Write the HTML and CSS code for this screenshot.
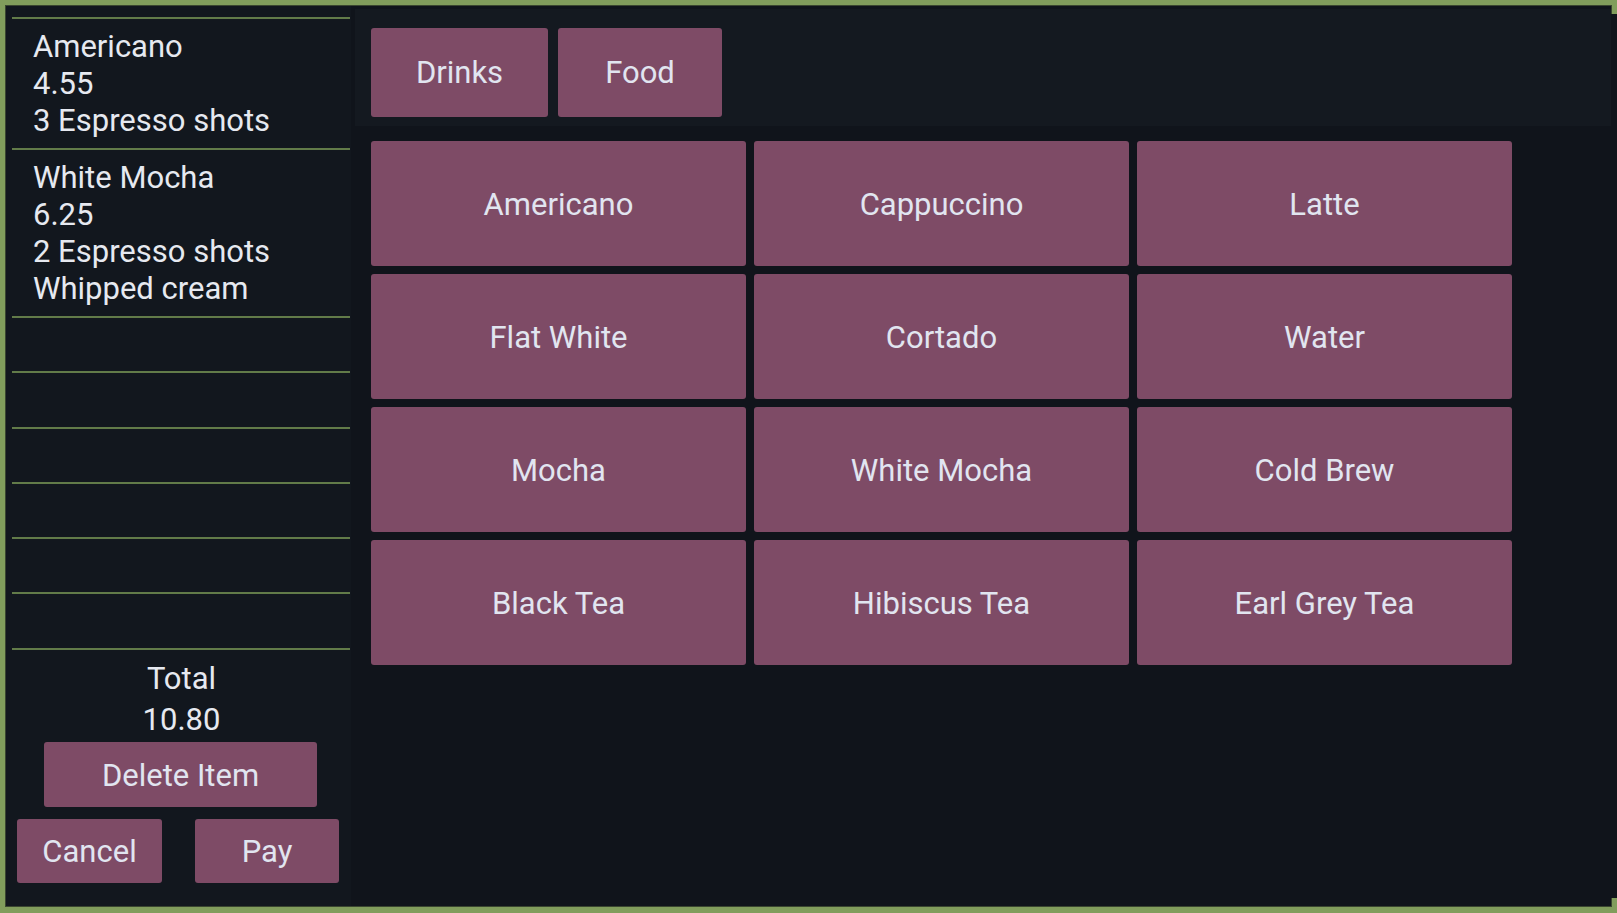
FILE: index.html
```html
<!DOCTYPE html>
<html>
<head>
<meta charset="utf-8">
<title>POS</title>
<link rel="stylesheet" href="styles.css">
</head>
<body>
<div class="app">
  <aside class="sidebar">
    <div class="order-list">
      <div class="item">Americano<br>4.55<br>3 Espresso shots</div>
      <div class="item">White Mocha<br>6.25<br>2 Espresso shots<br>Whipped cream</div>
      <div class="item empty"></div>
      <div class="item empty"></div>
      <div class="item empty"></div>
      <div class="item empty"></div>
      <div class="item empty"></div>
      <div class="item empty"></div>
    </div>
    <div class="total">
      <div class="total-label">Total</div>
      <div class="total-value">10.80</div>
    </div>
    <button class="btn btn-delete">Delete Item</button>
    <div class="action-row">
      <button class="btn btn-cancel">Cancel</button>
      <button class="btn btn-pay">Pay</button>
    </div>
  </aside>
  <main class="main">
    <div class="tabs">
      <button class="btn tab tab-drinks">Drinks</button>
      <button class="btn tab tab-food">Food</button>
    </div>
    <div class="grid">
      <button class="btn cell">Americano</button>
      <button class="btn cell">Cappuccino</button>
      <button class="btn cell">Latte</button>
      <button class="btn cell">Flat White</button>
      <button class="btn cell">Cortado</button>
      <button class="btn cell">Water</button>
      <button class="btn cell">Mocha</button>
      <button class="btn cell">White Mocha</button>
      <button class="btn cell">Cold Brew</button>
      <button class="btn cell">Black Tea</button>
      <button class="btn cell">Hibiscus Tea</button>
      <button class="btn cell">Earl Grey Tea</button>
    </div>
  </main>
</div>
</body>
</html>
```

FILE: styles.css
```css
* {
  box-sizing: border-box;
}

html, body {
  margin: 0;
  padding: 0;
}

body {
  width: 1617px;
  height: 913px;
  overflow: hidden;
  background: #819d5c;
  font-family: Roboto, "Liberation Sans", sans-serif;
  font-size: 31px;
  line-height: 37px;
  color: #e6e9f0;
}

.app {
  position: relative;
  margin: 6px 0 0 6px;
  width: 1605px;
  height: 900px;
  display: flex;
  background: #10141b;
  box-shadow: 0 0 0 1px #3a4630;
}

.app::after {
  content: "";
  position: absolute;
  left: 100%;
  top: 8px;
  width: 6px;
  height: 884px;
  background: #10141b;
}

.sidebar {
  width: 345px;
  flex: none;
  background: #12171e;
  padding: 11px 1px 0 6px;
}

.order-list {
  border-bottom: 2px solid #627b49;
}

.item {
  border-top: 2px solid #627b49;
  padding: 8.5px 0 9.5px 21px;
}

.item.empty {
  height: 55.3px;
}

.total {
  text-align: center;
  margin-top: 10px;
  padding-left: 1px;
}

.total-value {
  margin-top: 4px;
}

.btn {
  display: flex;
  align-items: center;
  justify-content: center;
  border: none;
  border-radius: 3px;
  background: #7e4b66;
  color: #e1e5f0;
  font-family: Roboto, "Liberation Sans", sans-serif;
  font-size: 31px;
  line-height: 37px;
  padding: 0;
}

.btn-delete {
  margin: 4px 0 0 32px;
  width: 273px;
  height: 65px;
  padding-top: 2px;
}

.action-row {
  display: flex;
  gap: 33px;
  margin: 12px 0 0 5px;
}

.btn-cancel,
.btn-pay {
  height: 64px;
  padding-top: 2px;
}

.btn-cancel {
  width: 145px;
}

.btn-pay {
  width: 144px;
}

.main {
  flex: 1;
  padding: 3px 0 0 4px;
}

.tabs {
  height: 117px;
  background: #141920;
  display: flex;
  gap: 10px;
  padding: 19px 16px 0;
}

.tab {
  height: 89px;
}

.tab-drinks {
  width: 177px;
}

.tab-food {
  width: 164px;
}

.grid {
  display: grid;
  grid-template-columns: repeat(3, 375px);
  grid-auto-rows: 125px;
  gap: 8px;
  margin: 15px 0 0 16px;
}

.cell {
  padding-top: 2px;
}
```
